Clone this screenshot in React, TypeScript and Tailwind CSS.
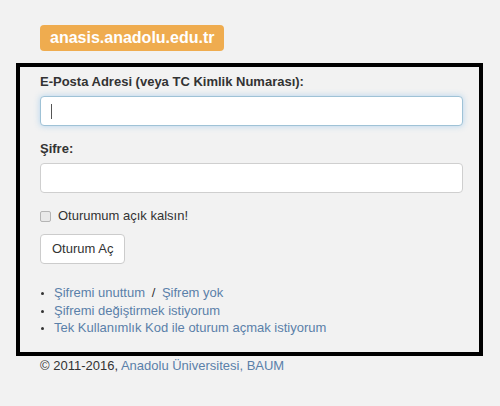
import React from "react";

export default function App() {
  return (
    <div
      className="w-[500px] h-[406px] bg-[#f2f2f2] overflow-hidden text-[#333]"
      style={{ fontFamily: '"Liberation Sans", Arial, sans-serif' }}
    >
      <div className="pt-[25px] pl-[16px]">
        <div className="ml-[24px] inline-flex h-[26px] items-center rounded-[4px] bg-[#efac4f] px-[10px] text-[16px] font-bold text-white leading-none">
          anasis.anadolu.edu.tr
        </div>
        <div className="mt-[12px] w-[467px] h-[293px] border-[4px] border-black pt-[5px] pl-[20px] pr-[16px]">
          <div className="text-[13px] font-bold leading-[20px] text-[#333]">
            E-Posta Adresi (veya TC Kimlik Numarası):
          </div>
          <div className="mt-[4px] h-[30px] flex items-center rounded-[4px] border border-[#9fc2d6] bg-white pl-[10px] shadow-[0_0_6px_rgba(102,175,233,0.45)]">
            <span className="block w-[1px] h-[15px] bg-[#555]" />
          </div>
          <div className="mt-[13px] text-[13px] font-bold leading-[20px] text-[#333]">
            Şifre:
          </div>
          <div className="mt-[4px] h-[30px] rounded-[4px] border border-[#cfcfcf] bg-white" />
          <div className="mt-[13px] h-[20px] flex items-center gap-[7px]">
            <span className="block w-[11px] h-[11px] rounded-[2px] border border-[#b5b5b5] bg-[#e9e9e9]" />
            <span className="text-[13px] text-[#333]">Oturumum açık kalsın!</span>
          </div>
          <div className="mt-[8px] inline-flex h-[30px] items-center rounded-[4px] border border-[#cccccc] bg-white px-[11px] text-[13px] text-[#333]">
            Oturum Aç
          </div>
          <ul className="mt-[20px] list-disc pl-[14px] text-[13px] leading-[17.5px] text-[#5a80a9] marker:text-[#333] marker:text-[10px]">
            <li>
              Şifremi unuttum <span className="mx-[3px] text-[#333]">/</span> Şifrem yok
            </li>
            <li>Şifremi değiştirmek istiyorum</li>
            <li>Tek Kullanımlık Kod ile oturum açmak istiyorum</li>
          </ul>
        </div>
        <div className="ml-[24px] mt-[1px] text-[13px] leading-[18px] text-[#333]">
          © 2011-2016, <span className="text-[#5a80a9]">Anadolu Üniversitesi, BAUM</span>
        </div>
      </div>
    </div>
  );
}
